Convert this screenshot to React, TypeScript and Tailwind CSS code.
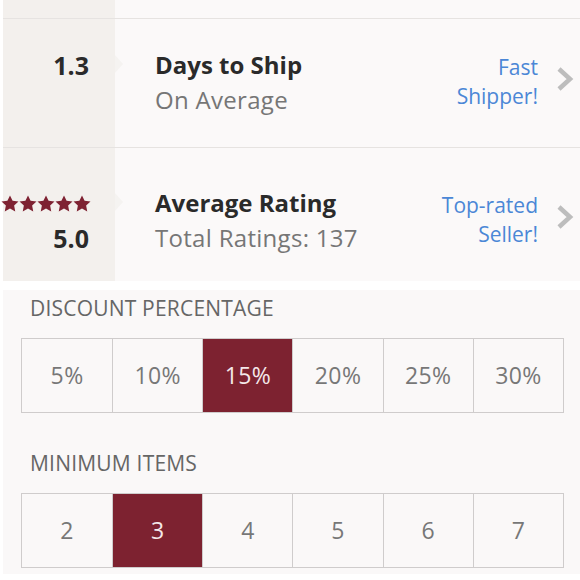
import React from 'react';

const font = { fontFamily: '"Open Sans", Lato, Arial, sans-serif' };

function Star() {
  return (
    <svg viewBox="1 1 22 21" className="h-[17px] w-[18px]" fill="#7e2232">
      <path d="M12 1.5l3.2 6.7 7.3.9-5.4 5 1.4 7.2L12 17.7l-6.5 3.6 1.4-7.2-5.4-5 7.3-.9z" />
    </svg>
  );
}

function Chevron() {
  return (
    <svg viewBox="0 0 20 26" className="h-[26px] w-[20px]" fill="none" stroke="#bdbdbd" strokeWidth="4.5">
      <path d="M4 3l11 10-11 10" />
    </svg>
  );
}

type StatRowProps = {
  left: React.ReactNode;
  title: string;
  subtitle: string;
  badge: [string, string];
  height: string;
  pad: string;
  notch: string;
};

function StatRow({ left, title, subtitle, badge, height, pad, notch }: StatRowProps) {
  return (
    <div className={`grid grid-cols-[112px_1fr] border-t border-[#e6e3e1] ${height}`}>
      <div className={`relative bg-[#f3f0ed] ${pad}`}>
        {left}
        {/* little pointer into the content column */}
        <div className={`absolute -right-[8px] ${notch} h-0 w-0 border-y-[9px] border-l-[8px] border-y-transparent border-l-[#f5f3f1]`} />
      </div>
      <div className={`flex items-start ${pad} pl-[40px] pr-[5px]`}>
        <div className="flex-1 whitespace-nowrap">
          <div className="text-[24px] font-bold leading-[30px] text-[#2a2a2a]">{title}</div>
          <div className="mt-[4px] text-[24px] leading-[32px] tracking-[0.3px] text-[#767676]">{subtitle}</div>
        </div>
        <div className="mt-[3px] text-right text-[21px] leading-[29px] text-[#4b87d6]">
          <div>{badge[0]}</div>
          <div>{badge[1]}</div>
        </div>
        <div className="ml-[17px] mt-[16px] w-[20px]">
          <Chevron />
        </div>
      </div>
    </div>
  );
}

function OptionGroup({ label, options, selected }: { label: string; options: string[]; selected: string }) {
  return (
    <div>
      <div className="pl-[9px] text-[21px] uppercase leading-[26px] tracking-[0.2px] text-[#666]">{label}</div>
      <div className="mt-[17px] grid grid-cols-6 border border-[#cfcccc]">
        {options.map((opt, i) => (
          <div
            key={opt}
            className={`flex h-[73px] items-center justify-center text-[23px] tracking-[0.4px] ${i > 0 ? 'border-l border-[#cfcccc]' : ''} ${
              opt === selected ? 'bg-[#7d2230] text-[#f4e7e9]' : 'text-[#777]'
            }`}
          >
            {opt}
          </div>
        ))}
      </div>
    </div>
  );
}

export default function App() {
  return (
    <div className="h-[580px] w-[580px] overflow-hidden bg-white pl-[3px]" style={font}>
      {/* Seller stats */}
      <div className="bg-[#fbf9f9]">
        <div className="grid h-[18px] grid-cols-[112px_1fr]">
          <div className="bg-[#f3f0ed]" />
          <div />
        </div>
        <StatRow
          height="h-[129px]"
          pad="pt-[31px]"
          notch="top-[36px]"
          left={
            <div className="pr-[26px] text-right text-[25px] font-bold leading-[30px] text-[#2a2a2a]">1.3</div>
          }
          title="Days to Ship"
          subtitle="On Average"
          badge={['Fast', 'Shipper!']}
        />
        <StatRow
          height="h-[134px]"
          pad="pt-[40px]"
          notch="top-[45px]"
          left={
            <div className="pr-[20px]">
              <div className="-ml-[2px] flex h-[30px] items-center">
                <Star />
                <Star />
                <Star />
                <Star />
                <Star />
              </div>
              <div className="mt-[4px] pr-[6px] text-right text-[25px] font-bold leading-[32px] text-[#2a2a2a]">5.0</div>
            </div>
          }
          title="Average Rating"
          subtitle="Total Ratings: 137"
          badge={['Top-rated', 'Seller!']}
        />
      </div>

      {/* Discount options */}
      <div className="mt-[9px] h-[284px] bg-[#faf8f8] pl-[18px] pr-[16px] pt-[5px]">
        <OptionGroup label="Discount Percentage" options={['5%', '10%', '15%', '20%', '25%', '30%']} selected="15%" />
        <div className="mt-[37px]">
          <OptionGroup label="Minimum Items" options={['2', '3', '4', '5', '6', '7']} selected="3" />
        </div>
      </div>
    </div>
  );
}
